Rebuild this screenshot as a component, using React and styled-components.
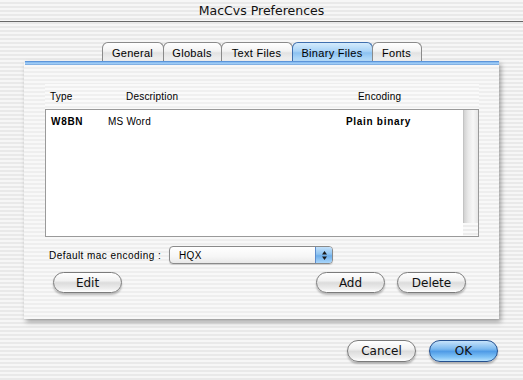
import React from 'react';
import styled, { createGlobalStyle, css } from 'styled-components';

const stripes = css`
	background: repeating-linear-gradient(to bottom, #f6f6f6 0 2px, #e9e9e9 2px 4px);
`;

const GlobalStyle = createGlobalStyle`
	html, body {
		margin: 0;
		padding: 0;
	}
	body {
		font-family: 'Liberation Sans', Arial, sans-serif;
		color: #000;
	}
`;

const Window = styled.div`
	width: 523px;
	height: 380px;
	overflow: hidden;
	display: flex;
	flex-direction: column;
	${stripes};
`;

const TitleBar = styled.div`
	height: 21px;
	border-bottom: 1px solid #686868;
	display: flex;
	align-items: center;
	justify-content: center;
	font-family: 'DejaVu Sans', sans-serif;
	font-size: 12.5px;
	color: #111;
`;

const Tabs = styled.div`
	margin-top: 20px;
	display: flex;
	justify-content: center;
	height: 19px;
`;

const Tab = styled.div`
	box-sizing: border-box;
	width: ${props => props.w}px;
	height: 19px;
	margin-left: -1px;
	border: 1px solid ${props => (props.active ? '#3f6fae' : '#8a8a8a')};
	border-bottom: none;
	border-radius: 6px 6px 0 0;
	display: flex;
	align-items: center;
	justify-content: center;
	padding-top: 1px;
	font-size: 11px;
	letter-spacing: 0.3px;
	background: ${props =>
		props.active
			? 'linear-gradient(to bottom, #d4ebfc 0%, #a9d3f7 45%, #8cc2f1 55%, #b9dffc 100%)'
			: 'linear-gradient(to bottom, #ffffff 0%, #f2f2f2 45%, #e2e2e2 55%, #f3f3f3 100%)'};
	&:first-child {
		margin-left: 0;
	}
`;

const Panel = styled.div`
	margin: 0 24px;
	height: 258px;
	box-sizing: border-box;
	border-top: 4px solid transparent;
	border-image: linear-gradient(to bottom, #3a74c4 0, #7fb6ef 1px, #a8d2f7 3px, #5d8fcf 4px) 4 0 0 0;
	box-shadow: 2px 3px 5px rgba(0, 0, 0, 0.35);
	display: flex;
	flex-direction: column;
	padding: 19px 20px 0 20px;
	background: repeating-linear-gradient(to bottom, #f8f8f8 0 2px, #eeeeee 2px 4px);
	border-left: 1px solid #a4a4a4;
`;

const Header = styled.div`
	height: 25px;
	display: flex;
	align-items: center;
	font-size: 10px;
	background: repeating-linear-gradient(to bottom, #fafafa 0 2px, #f0f0f0 2px 4px);
`;

const Col = styled.span`
	width: ${props => props.w}px;
	padding-left: ${props => props.pl || 0}px;
	flex-shrink: 0;
	font-weight: ${props => (props.bold ? 'bold' : 'normal')};
	letter-spacing: ${props => (props.bold ? '0.7px' : '0.2px')};
`;

const List = styled.div`
	height: 128px;
	box-sizing: border-box;
	border: 1px solid #9a9a9a;
	background: #fff;
	display: flex;
`;

const Rows = styled.div`
	flex: 1;
	padding-top: 1px;
`;

const Row = styled.div`
	height: 20px;
	display: flex;
	align-items: center;
	font-size: 10px;
`;

const Scroll = styled.div`
	width: 15px;
	display: flex;
	flex-direction: column;
`;

const Track = styled.div`
	flex: 1;
	background: linear-gradient(to right, #d2d2d2 0%, #e9e9e9 30%, #f7f7f7 65%, #e6e6e6 100%);
	border-left: 1px solid #c4c4c4;
`;

const Corner = styled.div`
	height: 13px;
	background: repeating-linear-gradient(to bottom, #fafafa 0 2px, #ededed 2px 4px);
`;

const EncodingRow = styled.div`
	margin-top: 9px;
	padding-left: 4px;
	display: flex;
	align-items: center;
	height: 18px;
	font-size: 10px;
`;

const Label = styled.span`
	width: 120px;
	letter-spacing: 0.45px;
`;

const Popup = styled.div`
	box-sizing: border-box;
	width: 164px;
	height: 18px;
	border: 1px solid #8a8a8a;
	border-radius: 4px;
	background: linear-gradient(to bottom, #ffffff 0%, #f6f6f6 60%, #e8e8e8 100%);
	display: flex;
	overflow: hidden;
	box-shadow: 0 1px 1px rgba(0, 0, 0, 0.15);
`;

const PopupText = styled.span`
	flex: 1;
	padding-left: 9px;
	display: flex;
	align-items: center;
	letter-spacing: 0.4px;
`;

const PopupArrow = styled.span`
	width: 16px;
	border-left: 1px solid #5c8ccc;
	background: linear-gradient(to bottom, #c3e1fb 0%, #8ec3f0 45%, #6eaeea 55%, #a9d6fb 100%);
	display: flex;
	align-items: center;
	justify-content: center;
`;

const ButtonRow = styled.div`
	margin-top: 8px;
	padding: 0 13px 0 8px;
	display: flex;
	gap: 12px;
`;

const Spacer = styled.div`
	flex: 1;
`;

const Button = styled.div`
	box-sizing: border-box;
	width: ${props => props.w || 69}px;
	height: ${props => props.h || 21}px;
	border-radius: 11px;
	border: 1px solid ${props => (props.primary ? '#24508f' : '#7b7b7b')};
	display: flex;
	align-items: center;
	justify-content: center;
	font-family: 'DejaVu Sans', sans-serif;
	font-size: 12px;
	color: #111;
	box-shadow: 0 2px 2px rgba(0, 0, 0, 0.25);
	background: ${props =>
		props.primary
			? 'linear-gradient(to bottom, #c6e3fb 0%, #7cb9ef 40%, #4f9be6 52%, #7fc2f6 80%, #b7e2fd 100%)'
			: 'linear-gradient(to bottom, #ffffff 0%, #f1f1f1 40%, #dcdcdc 52%, #ececec 80%, #ffffff 100%)'};
`;

const Footer = styled.div`
	margin-top: 21px;
	padding-right: 25px;
	display: flex;
	justify-content: flex-end;
	gap: 13px;
`;

const tabs = [
	{ label: 'General', w: 62 },
	{ label: 'Globals', w: 59 },
	{ label: 'Text Files', w: 72 },
	{ label: 'Binary Files', w: 81, active: true },
	{ label: 'Fonts', w: 50 },
];

const Arrows = () => (
	<svg width="7" height="11" viewBox="0 0 7 11">
		<path d="M3.5 1 L6 4.5 L1 4.5 Z" fill="#1a1a1a" />
		<path d="M3.5 10 L6 6.5 L1 6.5 Z" fill="#1a1a1a" />
	</svg>
);

const App = () => (
	<Window>
		<GlobalStyle />
		<TitleBar>MacCvs Preferences</TitleBar>
		<Tabs>
			{tabs.map(tab => (
				<Tab key={tab.label} w={tab.w} active={tab.active}>
					{tab.label}
				</Tab>
			))}
		</Tabs>
		<Panel>
			<Header>
				<Col w={76} pl={5}>Type</Col>
				<Col w={232}>Description</Col>
				<Col w={80}>Encoding</Col>
			</Header>
			<List>
				<Rows>
					<Row>
						<Col w={57} pl={5} bold>W8BN</Col>
						<Col w={238}>MS Word</Col>
						<Col w={80} bold>Plain binary</Col>
					</Row>
				</Rows>
				<Scroll>
					<Track />
					<Corner />
				</Scroll>
			</List>
			<EncodingRow>
				<Label>Default mac encoding :</Label>
				<Popup>
					<PopupText>HQX</PopupText>
					<PopupArrow>
						<Arrows />
					</PopupArrow>
				</Popup>
			</EncodingRow>
			<ButtonRow>
				<Button>Edit</Button>
				<Spacer />
				<Button>Add</Button>
				<Button>Delete</Button>
			</ButtonRow>
		</Panel>
		<Footer>
			<Button h={22}>Cancel</Button>
			<Button h={22} primary>OK</Button>
		</Footer>
	</Window>
);

export default App;
